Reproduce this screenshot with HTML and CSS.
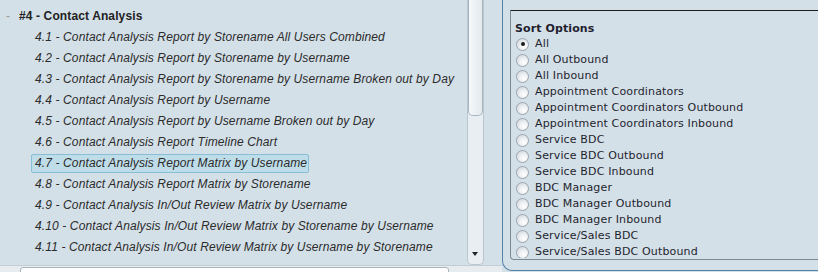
FILE: index.html
```html
<!DOCTYPE html>
<html>
<head>
<meta charset="utf-8">
<link rel="stylesheet" href="styles.css">
</head>
<body>
<div class="page">
  <div class="left">
    <div class="tree-wrap">
      <div class="tree">
        <div class="group-head"><span class="toggle">-</span><span class="group-title">#4 - Contact Analysis</span></div>
        <div class="item"><span class="link">4.1 - Contact Analysis Report by Storename All Users Combined</span></div>
        <div class="item"><span class="link">4.2 - Contact Analysis Report by Storename by Username</span></div>
        <div class="item"><span class="link">4.3 - Contact Analysis Report by Storename by Username Broken out by Day</span></div>
        <div class="item"><span class="link">4.4 - Contact Analysis Report by Username</span></div>
        <div class="item"><span class="link">4.5 - Contact Analysis Report by Username Broken out by Day</span></div>
        <div class="item"><span class="link">4.6 - Contact Analysis Report Timeline Chart</span></div>
        <div class="item"><span class="link selected">4.7 - Contact Analysis Report Matrix by Username</span></div>
        <div class="item"><span class="link">4.8 - Contact Analysis Report Matrix by Storename</span></div>
        <div class="item"><span class="link">4.9 - Contact Analysis In/Out Review Matrix by Username</span></div>
        <div class="item"><span class="link">4.10 - Contact Analysis In/Out Review Matrix by Storename by Username</span></div>
        <div class="item"><span class="link">4.11 - Contact Analysis In/Out Review Matrix by Username by Storename</span></div>
      </div>
      <div class="vscroll">
        <div class="thumb"></div>
        <div class="arrow"></div>
      </div>
    </div>
    <div class="bottom-bar">
      <div class="hinput"></div>
    </div>
  </div>
  <div class="right">
    <div class="sort-box">
      <div class="sort-title">Sort Options</div>
      <div class="options">
        <label class="opt"><span class="radio checked"></span>All</label>
        <label class="opt"><span class="radio"></span>All Outbound</label>
        <label class="opt"><span class="radio"></span>All Inbound</label>
        <label class="opt"><span class="radio"></span>Appointment Coordinators</label>
        <label class="opt"><span class="radio"></span>Appointment Coordinators Outbound</label>
        <label class="opt"><span class="radio"></span>Appointment Coordinators Inbound</label>
        <label class="opt"><span class="radio"></span>Service BDC</label>
        <label class="opt"><span class="radio"></span>Service BDC Outbound</label>
        <label class="opt"><span class="radio"></span>Service BDC Inbound</label>
        <label class="opt"><span class="radio"></span>BDC Manager</label>
        <label class="opt"><span class="radio"></span>BDC Manager Outbound</label>
        <label class="opt"><span class="radio"></span>BDC Manager Inbound</label>
        <label class="opt"><span class="radio"></span>Service/Sales BDC</label>
        <label class="opt"><span class="radio"></span>Service/Sales BDC Outbound</label>
      </div>
    </div>
  </div>
</div>
</body>
</html>
```
FILE: styles.css
```css
html, body {
  margin: 0;
  padding: 0;
  background: #d4e0e8;
  overflow: hidden;
}
.page {
  display: flex;
  width: 818px;
  height: 272px;
  overflow: hidden;
}
.left {
  width: 502px;
  flex: none;
  display: flex;
  flex-direction: column;
}
.tree-wrap {
  height: 265px;
  display: flex;
  flex: none;
}
.tree {
  width: 467px;
  flex: none;
  padding-top: 6px;
  font-family: "Liberation Sans", Arial, sans-serif;
  font-size: 12px;
  letter-spacing: 0.12px;
  color: #2b2b2b;
  overflow: hidden;
  white-space: nowrap;
}
.group-head {
  height: 20px;
  line-height: 21px;
  display: flex;
}
.toggle {
  width: 13px;
  padding-left: 6px;
  color: #9a9a9a;
  font-weight: normal;
}
.group-title {
  font-weight: bold;
  color: #222;
}
.item {
  height: 19px;
  padding-top: 2px;
  padding-left: 31px;
}
.link {
  display: inline-block;
  line-height: 17px;
  padding: 0 1px 0 3px;
  border: 1px solid transparent;
  border-radius: 2px;
  font-style: italic;
}
.link.selected {
  background: #bfdde8;
  border-color: #86bfd6;
}
.vscroll {
  width: 17px;
  height: 265px;
  box-sizing: border-box;
  flex: none;
  position: relative;
  background: #e9eef2;
  border: 1px solid #b9c6cf;
  border-top: none;
  border-radius: 0 0 5px 5px;
}
.thumb {
  height: 116px;
  box-sizing: border-box;
  background: linear-gradient(to right, #f6f8fa, #e3e9ee);
  border: 1px solid #a9b6c0;
  border-top: none;
  border-radius: 0 0 5px 5px;
}
.arrow {
  position: absolute;
  left: 4px;
  bottom: 8px;
  width: 0;
  height: 0;
  border-left: 3.5px solid transparent;
  border-right: 3.5px solid transparent;
  border-top: 4px solid #222;
}
.bottom-bar {
  flex: 1;
  background: #e6ecf0;
  border-top: 1px solid #c2cdd5;
  padding: 1px 0 0 20px;
}
.hinput {
  width: 429px;
  height: 10px;
  box-sizing: border-box;
  background: #ffffff;
  border: 1px solid #aab4bc;
  border-radius: 3px 3px 0 0;
}
.right {
  flex: 1;
  height: 271px;
  box-sizing: border-box;
  border-left: 1px solid #5582a6;
  border-bottom: 1px solid #5582a6;
  border-bottom-left-radius: 10px;
  padding: 10px 0 0 7px;
}
.sort-box {
  height: 250px;
  box-sizing: border-box;
  border-top: 1px solid #1e1e1e;
  border-left: 1px solid #7d8a95;
  border-bottom: 1px solid #7d8a95;
  border-bottom-left-radius: 4px;
  padding: 11px 0 0 4px;
  overflow: hidden;
  font-family: "DejaVu Sans", Verdana, sans-serif;
  font-size: 11px;
  color: #1f1f2e;
}
.sort-title {
  font-weight: bold;
  line-height: 14px;
  letter-spacing: 0.1px;
}
.options {
  display: flex;
  flex-direction: column;
  height: 222px;
  overflow: hidden;
}
.opt {
  flex: none;
  height: 16px;
  line-height: 16px;
  display: flex;
  align-items: center;
  letter-spacing: 0.15px;
  white-space: nowrap;
}
.radio {
  width: 13px;
  height: 13px;
  box-sizing: border-box;
  border-radius: 50%;
  border: 1px solid #9ba5ad;
  background: radial-gradient(circle at 62% 68%, #ffffff 0%, #eef1f3 40%, #c9d0d6 100%);
  margin: 0 6px 0 1px;
  flex: none;
  display: flex;
  align-items: center;
  justify-content: center;
}
.radio.checked::after {
  content: "";
  width: 4px;
  height: 4px;
  border-radius: 50%;
  background: #1a1a1a;
}
```
